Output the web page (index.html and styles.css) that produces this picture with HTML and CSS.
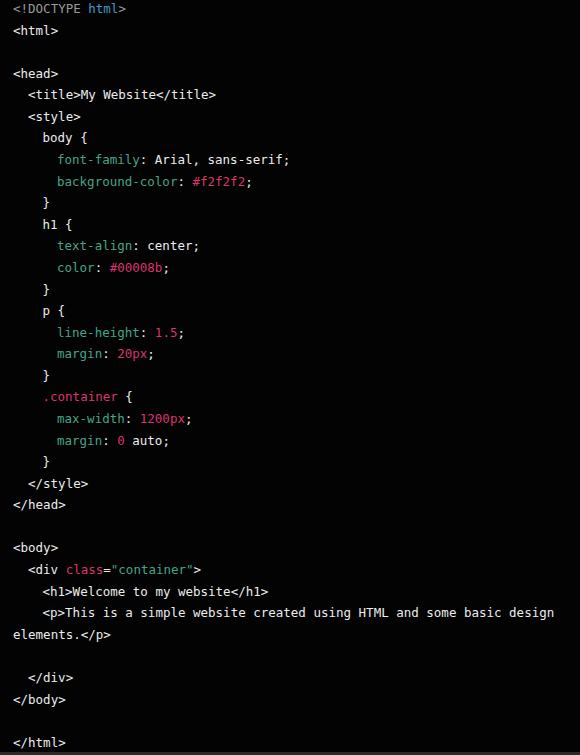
FILE: index.html
```html
<!DOCTYPE html>
<html>
<head>
<meta charset="utf-8">
<link rel="stylesheet" href="styles.css">
</head>
<body>
<div class="viewer">
<div class="code">
<div class="ln"><span class="dim">&lt;!DOCTYPE</span> <span class="kw">html</span><span class="dim">&gt;</span></div>
<div class="ln">&lt;html&gt;</div>
<div class="ln"> </div>
<div class="ln">&lt;head&gt;</div>
<div class="ln i1">&lt;title&gt;My Website&lt;/title&gt;</div>
<div class="ln i1">&lt;style&gt;</div>
<div class="ln i2">body {</div>
<div class="ln i3"><span class="prop">font-family</span>: Arial, sans-serif;</div>
<div class="ln i3"><span class="prop">background-color</span>: <span class="val">#f2f2f2</span>;</div>
<div class="ln i2">}</div>
<div class="ln i2">h1 {</div>
<div class="ln i3"><span class="prop">text-align</span>: center;</div>
<div class="ln i3"><span class="prop">color</span>: <span class="val">#00008b</span>;</div>
<div class="ln i2">}</div>
<div class="ln i2">p {</div>
<div class="ln i3"><span class="prop">line-height</span>: <span class="val">1.5</span>;</div>
<div class="ln i3"><span class="prop">margin</span>: <span class="val">20px</span>;</div>
<div class="ln i2">}</div>
<div class="ln i2"><span class="val">.container</span> {</div>
<div class="ln i3"><span class="prop">max-width</span>: <span class="val">1200px</span>;</div>
<div class="ln i3"><span class="prop">margin</span>: <span class="val">0</span> auto;</div>
<div class="ln i2">}</div>
<div class="ln i1">&lt;/style&gt;</div>
<div class="ln">&lt;/head&gt;</div>
<div class="ln"> </div>
<div class="ln">&lt;body&gt;</div>
<div class="ln i1">&lt;div <span class="val">class</span>=<span class="prop">"container"</span>&gt;</div>
<div class="ln i2">&lt;h1&gt;Welcome to my website&lt;/h1&gt;</div>
<div class="ln i2">&lt;p&gt;This is a simple website created using HTML and some basic design</div>
<div class="ln">elements.&lt;/p&gt;</div>
<div class="ln"> </div>
<div class="ln i1">&lt;/div&gt;</div>
<div class="ln">&lt;/body&gt;</div>
<div class="ln"> </div>
<div class="ln">&lt;/html&gt;</div>
</div>
</div>
<div class="bottom-bar"></div>
</body>
</html>
```
FILE: styles.css
```css
html, body {
  margin: 0;
  padding: 0;
  background: #030303;
}
body {
  width: 580px;
  height: 755px;
  overflow: hidden;
  display: flex;
  flex-direction: column;
}
.viewer {
  flex: 1;
  overflow: hidden;
  padding: 0 12px 0 13px;
}
.code {
  margin-top: -2px;
  font-family: "DejaVu Sans Mono", "Liberation Mono", monospace;
  font-size: 12.5px;
  line-height: 21.59px;
  color: #ececec;
}
.ln {
  white-space: pre;
  height: 21.59px;
}
.i1 { padding-left: 15px; }
.i2 { padding-left: 29.5px; }
.i3 { padding-left: 44px; }
.dim { color: #9a9a9a; }
.kw { color: #3d9ccb; }
.prop { color: #47a386; }
.val { color: #d8356e; }
.bottom-bar {
  height: 3px;
  background: #2a2a2a;
  flex: none;
}
```
